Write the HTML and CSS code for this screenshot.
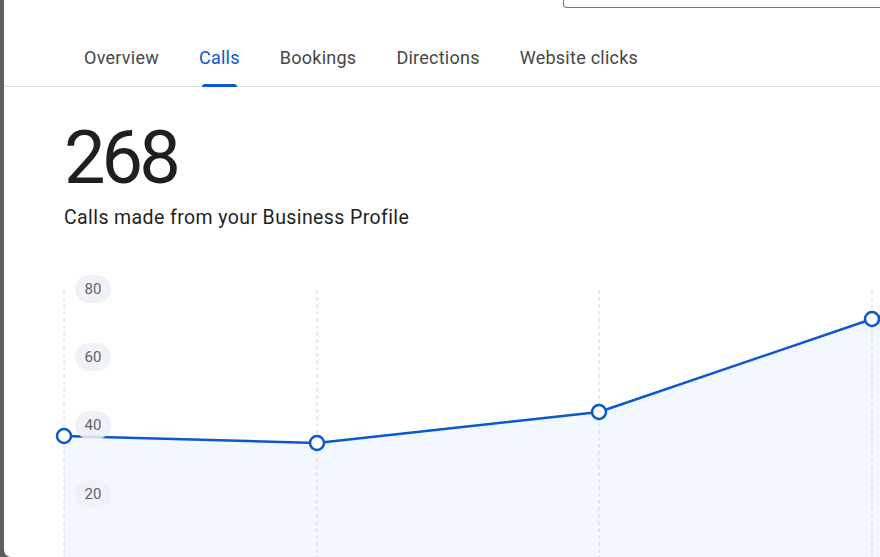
FILE: index.html
```html
<!DOCTYPE html>
<html>
<head>
<meta charset="utf-8">
<link rel="stylesheet" href="styles.css">
</head>
<body>
<div class="page">
  <div class="panel">
    <div class="topbar"><div class="select-box"></div></div>
    <nav class="tabs">
      <div class="tab">Overview</div>
      <div class="tab active">Calls</div>
      <div class="tab">Bookings</div>
      <div class="tab">Directions</div>
      <div class="tab">Website clicks</div>
    </nav>
    <section class="summary">
      <div class="big-number">268</div>
      <div class="caption">Calls made from your Business Profile</div>
    </section>
    <div class="chart">
      <svg width="876" height="287" viewBox="0 0 876 287" xmlns="http://www.w3.org/2000/svg">
        <polygon class="area" points="60,165 313,172 595,141 868,48 880,44 880,287 60,287"/>
        <g class="grid">
          <line x1="60" y1="19" x2="60" y2="287"/>
          <line x1="313" y1="19" x2="313" y2="287"/>
          <line x1="595" y1="19" x2="595" y2="287"/>
          <line x1="868" y1="19" x2="868" y2="287"/>
        </g>
        <polyline class="line" points="60,165 313,172 595,141 868,48 880,44"/>
        <g class="pills">
          <rect x="71" y="4" width="36" height="28" rx="14"/>
          <rect x="71" y="72" width="36" height="28" rx="14"/>
          <rect x="71" y="140" width="36" height="28" rx="14"/>
          <rect x="71" y="209" width="36" height="28" rx="14"/>
        </g>
        <g class="labels">
          <text x="89" y="22.5">80</text>
          <text x="89" y="90.5">60</text>
          <text x="89" y="158.5">40</text>
          <text x="89" y="227.5">20</text>
        </g>
        <g class="dots">
          <circle cx="60" cy="165" r="7"/>
          <circle cx="313" cy="172" r="7"/>
          <circle cx="595" cy="141" r="7"/>
          <circle cx="868" cy="48" r="7"/>
        </g>
      </svg>
    </div>
  </div>
</div>
</body>
</html>
```
FILE: styles.css
```css
html, body {
  margin: 0;
  padding: 0;
}
body {
  font-family: Roboto, "Noto Sans", Arial, sans-serif;
  background: #5e5e5e;
}
.page {
  display: flex;
  width: 880px;
  height: 557px;
  overflow: hidden;
  background: #5e5e5e;
}
.panel {
  margin-left: 4px;
  flex: 1;
  background: #ffffff;
  border-bottom-left-radius: 7px;
  overflow: hidden;
}
.topbar {
  height: 8px;
  padding-left: 559px;
}
.select-box {
  height: 7px;
  border-left: 1px solid #747775;
  border-bottom: 1px solid #747775;
  border-bottom-left-radius: 4px;
}
.tabs {
  display: flex;
  gap: 40px;
  padding-left: 80px;
  border-bottom: 1px solid #dadce0;
  height: 79px;
  box-sizing: border-box;
}
.tab {
  position: relative;
  padding-top: 38px;
  line-height: 24px;
  font-size: 18px;
  letter-spacing: 0.25px;
  color: #444746;
  white-space: nowrap;
}
.tab.active {
  color: #0b57d0;
}
.tab.active::after {
  content: "";
  position: absolute;
  left: 3px;
  right: 3px;
  bottom: -1px;
  height: 3px;
  background: #0b57d0;
  border-radius: 3px 3px 0 0;
}
.summary {
  padding-left: 60px;
  padding-top: 31px;
}
.big-number {
  font-size: 74px;
  line-height: 80px;
  letter-spacing: -4px;
  color: #1f1f1f;
  font-weight: 400;
}
.caption {
  margin-top: 8px;
  font-size: 19.5px;
  line-height: 24px;
  letter-spacing: 0.4px;
  color: #1f1f1f;
}
.chart {
  margin-top: 41px;
  height: 287px;
}
.chart svg {
  display: block;
}
.area {
  fill: #f3f8fe;
}
.grid line {
  stroke: #d3d6dc;
  stroke-width: 1;
  stroke-dasharray: 4 3;
}
.line {
  fill: none;
  stroke: #0b57d0;
  stroke-width: 2.5;
}
.pills rect {
  fill: #eef0f6;
  fill-opacity: 0.85;
}
.labels text {
  font-family: Roboto, "Noto Sans", Arial, sans-serif;
  font-size: 15px;
  fill: #5f6368;
  text-anchor: middle;
}
.dots circle {
  fill: #ffffff;
  stroke: #0b57d0;
  stroke-width: 2.5;
}
```
